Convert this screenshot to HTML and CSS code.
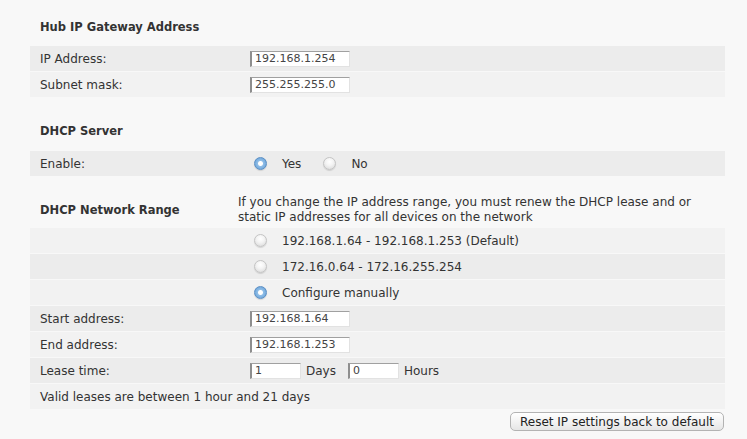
FILE: index.html
```html
<!DOCTYPE html>
<html lang="en">
<head>
  <meta charset="UTF-8">
  <title>Hub IP settings</title>
  <link rel="stylesheet" href="styles.css">
</head>
<body>

<div class="settings">

  <h2 class="section-title">Hub IP Gateway Address</h2>
  <div class="row dark">
    <label class="label" for="ip">IP Address:</label>
    <div class="value"><input class="field" type="text" id="ip" value="192.168.1.254"></div>
  </div>
  <div class="row light">
    <label class="label" for="mask">Subnet mask:</label>
    <div class="value"><input class="field" type="text" id="mask" value="255.255.255.0"></div>
  </div>

  <h2 class="section-title gap">DHCP Server</h2>
  <div class="row dark">
    <span class="label">Enable:</span>
    <div class="value choices">
      <span class="radio on"></span><span class="choice">Yes</span>
      <span class="radio"></span><span class="choice">No</span>
    </div>
  </div>

  <div class="range-head">
    <h2 class="label range-title">DHCP Network Range</h2>
    <p class="note">If you change the IP address range, you must renew the DHCP lease and or static IP addresses for all devices on the network</p>
  </div>
  <div class="row light">
    <span class="label"></span>
    <div class="value choices"><span class="radio"></span><span class="choice">192.168.1.64 - 192.168.1.253 (Default)</span></div>
  </div>
  <div class="row dark">
    <span class="label"></span>
    <div class="value choices"><span class="radio"></span><span class="choice">172.16.0.64 - 172.16.255.254</span></div>
  </div>
  <div class="row light">
    <span class="label"></span>
    <div class="value choices"><span class="radio on"></span><span class="choice">Configure manually</span></div>
  </div>
  <div class="row dark">
    <label class="label" for="start">Start address:</label>
    <div class="value"><input class="field" type="text" id="start" value="192.168.1.64"></div>
  </div>
  <div class="row light">
    <label class="label" for="end">End address:</label>
    <div class="value"><input class="field" type="text" id="end" value="192.168.1.253"></div>
  </div>
  <div class="row dark">
    <label class="label" for="days">Lease time:</label>
    <div class="value">
      <input class="field short" type="text" id="days" value="1"><span class="unit">Days</span>
      <input class="field short" type="text" id="hours" value="0"><span class="unit">Hours</span>
    </div>
  </div>
  <div class="row light">
    <span class="label wide">Valid leases are between 1 hour and 21 days</span>
  </div>

  <div class="actions">
    <button class="reset">Reset IP settings back to default</button>
  </div>

</div>

</body>
</html>
```

FILE: styles.css
```css
body {
  margin: 0;
  background: #f8f8f8;
  font-family: "DejaVu Sans", Verdana, sans-serif;
  font-size: 12px;
  color: #333;
}
.settings {
  width: 695px;
  margin-left: 30px;
}
.section-title {
  margin: 0;
  padding: 19px 10px 11px;
  font-size: 11.5px;
  line-height: 16px;
}
.section-title.gap {
  padding-top: 25px;
  padding-bottom: 12px;
}
.row {
  display: flex;
  align-items: center;
  height: 25px;
  margin-bottom: 1px;
}
.row.dark {
  background: #ececec;
}
.row.light {
  background: #f2f2f2;
}
.label {
  width: 210px;
  padding-left: 10px;
  flex: none;
}
.label.wide {
  width: auto;
}
.value {
  display: flex;
  align-items: center;
}
.field {
  width: 91px;
  height: 14px;
  padding: 0 3px;
  margin: 0;
  border: 1px solid #e2e2e2;
  border-top-color: #a0a0a0;
  border-left: 2px solid #8e8e8e;
  background: #fff;
  font-family: inherit;
  font-size: 11px;
  color: #444;
}
.field.short {
  width: 42px;
}
.unit {
  margin: 0 12px 0 5px;
}
.choices {
  padding-left: 4px;
}
.radio {
  width: 13px;
  height: 13px;
  border-radius: 50%;
  box-sizing: border-box;
  border: 1px solid #c4c4c4;
  background: radial-gradient(circle at 50% 35%, #ffffff 0, #f4f4f4 40%, #d6d6d6 100%);
  box-shadow: 0 1px 1px rgba(0, 0, 0, 0.12);
  flex: none;
}
.radio.on {
  border-color: #5b8fc4;
  background: radial-gradient(circle, #ffffff 0, #ffffff 2px, #8fbde6 3px, #5d9ad6 100%);
}
.choice {
  margin: 0 22px 0 15px;
}
.range-head {
  display: flex;
  align-items: center;
  margin-top: 19px;
  padding-bottom: 3px;
}
.range-title {
  margin: 0;
  font-size: 11.5px;
}
.note {
  margin: 0 0 0 -12px;
  width: 465px;
  line-height: 15px;
}
.actions {
  display: flex;
  justify-content: flex-end;
  padding-top: 2px;
}
.reset {
  height: 19px;
  padding: 0 9px;
  margin-right: 1px;
  border: 1px solid #b3b3b3;
  border-radius: 5px;
  background: linear-gradient(#ffffff, #f3f3f3 50%, #e6e6e6);
  font-family: inherit;
  font-size: 12px;
  color: #222;
}
```
